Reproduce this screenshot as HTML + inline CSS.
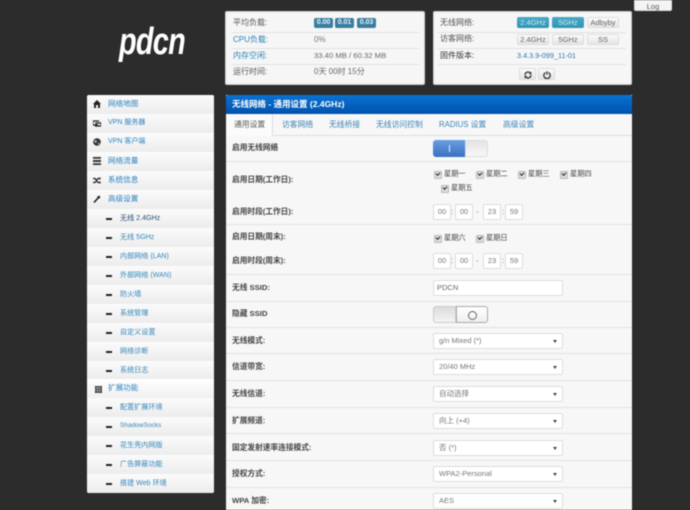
<!DOCTYPE html>
<html lang="zh"><head><meta charset="utf-8"><title>无线网络</title>
<style>
html,body{margin:0;padding:0;width:690px;height:510px;overflow:hidden;background:#2c2c2c}
#w{position:absolute;left:0;top:0;width:690px;height:510px;overflow:hidden;filter:blur(.55px);font-family:"Liberation Sans","Noto Sans CJK SC",sans-serif;font-size:8px;color:#555;background:#2c2c2c}
#w div,#w span.a,#w svg{position:absolute}
.t{white-space:nowrap;line-height:12px;height:12px}
.p{background:#f6f6f6;border-radius:2px;border:1px solid #ccc;box-sizing:border-box}
.l{height:1px;background:#e2e2e2}
.lk{color:#2d82b5}
.b{border-radius:2px;text-align:center;line-height:11px;height:11px;width:32px;box-sizing:border-box;font-size:7.5px}
.on{background:linear-gradient(#49a9c6,#2f95b5);color:#cfeaf3}
.of{background:linear-gradient(#fbfbfb,#e4e4e4);border:1px solid #ddd;color:#666;line-height:9px}
.bd{background:#3a7d9f;color:#e8f4f8;font-weight:bold;font-size:7px;border-radius:2px;height:10px;line-height:10px;text-align:center;top:18px}
.r{left:87px;width:127px;height:19px;background:linear-gradient(#fbfbfb,#ececec)}
.r .t{top:3px}
.m1 .t{left:21px;color:#2d82c0;font-size:7.6px}
.m2 .t{left:33px;color:#3388bb;font-size:7.1px}
.m2 i{position:absolute;left:19px;top:9px;width:6px;height:2px;background:#222}
.lb{left:232px;color:#444;font-weight:bold;font-size:7.7px}
.i{background:#fff;border:1px solid #ddd;box-sizing:border-box;border-radius:2px;color:#777}
.tm{width:18px;height:16px;text-align:center;line-height:14px;font-size:7.5px}
.sl{left:433px;width:130px;height:16px;line-height:14px;padding-left:5px;font-size:7.5px}
.ar:after{content:"";position:absolute;right:5px;top:6px;border:2.5px solid transparent;border-top:3px solid #444}
.c{width:6px;height:6px;background:#ddd;border:1px solid #bbb;border-radius:1px;box-sizing:content-box}
.c:after{content:"";position:absolute;left:1px;top:0;width:3px;height:2px;border-left:1.5px solid #222;border-bottom:1.5px solid #222;transform:rotate(-45deg)}
.ck{color:#444;font-size:7.2px}
.tb{top:119px;color:#3a85b5;font-size:7.8px}
.s{color:#888}
</style></head><body><div id="w">

<div class="t" style="left:119px;top:17px;height:50px;line-height:50px;font-size:38px;font-weight:bold;font-style:italic;color:#fff;letter-spacing:-1px;transform:scaleX(.76);transform-origin:left">pdcn</div>

<div class="b of" style="left:634px;top:-2px;width:38px;height:13px;line-height:15px;background:#f4f4f4;color:#555">Log</div>

<div class="p" style="left:225px;top:11px;width:200px;height:74px"></div>
<div class="l" style="left:231px;top:32px;width:188px"></div>
<div class="l" style="left:231px;top:48px;width:188px"></div>
<div class="l" style="left:231px;top:64px;width:188px"></div>
<div class="t" style="left:233px;top:17px">平均负载:</div>
<div class="bd" style="left:314px;width:19px">0.00</div>
<div class="bd" style="left:335px;width:19px">0.01</div>
<div class="bd" style="left:357px;width:19px">0.03</div>
<div class="t lk" style="left:233px;top:34px">CPU负载:</div><div class="t" style="left:314px;top:34px;color:#777">0%</div>
<div class="t lk" style="left:233px;top:50px">内存空闲:</div><div class="t" style="left:314px;top:50px;color:#666;font-size:7.7px">33.40 MB / 60.32 MB</div>
<div class="t" style="left:233px;top:66px">运行时间:</div><div class="t" style="left:314px;top:66px;color:#666">0天 00时 15分</div>

<div class="p" style="left:433px;top:11px;width:199px;height:74px"></div>
<div class="l" style="left:438px;top:32px;width:188px"></div>
<div class="l" style="left:438px;top:48px;width:188px"></div>
<div class="l" style="left:438px;top:64px;width:188px"></div>
<div class="t" style="left:440px;top:17px">无线网络:</div>
<div class="b on" style="left:517px;top:17px">2.4GHz</div>
<div class="b on" style="left:552px;top:17px">5GHz</div>
<div class="b of" style="left:587px;top:17px">Adbyby</div>
<div class="t" style="left:440px;top:33px">访客网络:</div>
<div class="b of" style="left:517px;top:34px">2.4GHz</div>
<div class="b of" style="left:552px;top:34px">5GHz</div>
<div class="b of" style="left:587px;top:34px">SS</div>
<div class="t" style="left:440px;top:50px;color:#333">固件版本:</div>
<div class="t lk" style="left:517px;top:50px;color:#2a78b0;font-size:7.3px">3.4.3.9-099_11-01</div>
<div class="b of" style="left:519px;top:68px;width:17px;height:12px"><svg style="left:3.5px;top:1.5px" width="8" height="8" viewBox="0 0 8 8"><path d="M1 4A3 3 0 0 1 6.5 2.4M7 4A3 3 0 0 1 1.5 5.6" fill="none" stroke="#333" stroke-width="1.3"/><path d="M7.5 .5V3.3H4.8ZM.5 7.5V4.7H3.2Z" fill="#333"/></svg></div>
<div class="b of" style="left:538px;top:68px;width:17px;height:12px"><svg style="left:3.5px;top:1.5px" width="8" height="8" viewBox="0 0 8 8"><path d="M2.4 1.6A3.2 3.2 0 1 0 5.6 1.6M4 .3V3.6" fill="none" stroke="#333" stroke-width="1.3"/></svg></div>

<div class="p" style="left:87px;top:95px;width:127px;height:398px;border:0;background:#eee"></div>
<div class="r m1" style="top:95px;border-radius:2px 2px 0 0"><svg style="left:6px;top:5px" width="8" height="8" viewBox="0 0 8 8"><path d="M4 0L8 4H7V8H5V5H3V8H1V4H0Z" fill="#222"/></svg><span class="t a">网络地图</span></div>
<div class="r m1" style="top:114px"><svg style="left:6px;top:6px" width="8" height="7" viewBox="0 0 8 7"><path d="M0 1H6M8 2V6H2M0 1V5H5M3 6V3H8" fill="none" stroke="#222" stroke-width="1.2"/></svg><span class="t a" style="font-size:7px">VPN 服务器</span></div>
<div class="r m1" style="top:133px"><svg style="left:6px;top:5px" width="8" height="8" viewBox="0 0 8 8"><circle cx="4" cy="4" r="3.8" fill="#333"/><path d="M2 2L4 3 3 5 1.5 4ZM5 5L7 5 5.5 7Z" fill="#ccc"/></svg><span class="t a" style="font-size:7px">VPN 客户端</span></div>
<div class="r m1" style="top:152px"><svg style="left:6px;top:5px" width="8" height="8" viewBox="0 0 8 8"><path d="M0 0H8V1.7H0ZM0 3H8V5H0ZM0 6.3H8V8H0Z" fill="#333"/></svg><span class="t a">网络流量</span></div>
<div class="r m1" style="top:171px"><svg style="left:6px;top:6px" width="8" height="7" viewBox="0 0 8 7"><path d="M0 1.5H2L5 5.5H7M0 5.5H2L5 1.5H7" fill="none" stroke="#222" stroke-width="1.3"/><path d="M6.5 0L8 1.5 6.5 3ZM6.5 4L8 5.5 6.5 7Z" fill="#222"/></svg><span class="t a">系统信息</span></div>
<div class="r m1" style="top:190px"><svg style="left:6px;top:5px" width="8" height="8" viewBox="0 0 8 8"><path d="M1 7.5L5 3" stroke="#222" stroke-width="1.6"/><path d="M4 2L6 0.5 7.5 2 6 4Z" fill="#222"/></svg><span class="t a">高级设置</span></div>
<div class="r m2" style="top:209px"><i></i><span class="t a" style="color:#274a78">无线 2.4GHz</span></div>
<div class="r m2" style="top:228px"><i></i><span class="t a">无线 5GHz</span></div>
<div class="r m2" style="top:247px"><i></i><span class="t a">内部网络 (LAN)</span></div>
<div class="r m2" style="top:266px"><i></i><span class="t a">外部网络 (WAN)</span></div>
<div class="r m2" style="top:285px"><i></i><span class="t a">防火墙</span></div>
<div class="r m2" style="top:304px"><i></i><span class="t a">系统管理</span></div>
<div class="r m2" style="top:323px"><i></i><span class="t a">自定义设置</span></div>
<div class="r m2" style="top:342px"><i></i><span class="t a">网络诊断</span></div>
<div class="r m2" style="top:361px"><i></i><span class="t a">系统日志</span></div>
<div class="r m1" style="top:379px;height:20px;background:linear-gradient(#fff,#f0f0f0)"><svg style="left:8px;top:7px" width="7" height="7" viewBox="0 0 7 7"><path d="M0 0H7V7H0Z" fill="#333"/><path d="M0 2.2H7M0 4.6H7M2.3 0V7M4.6 0V7" stroke="#ddd" stroke-width=".5"/></svg><span class="t a">扩展功能</span></div>
<div class="r m2" style="top:398px"><i></i><span class="t a">配置扩展环境</span></div>
<div class="r m2" style="top:417px"><i></i><span class="t a" style="font-size:6.5px">ShadowSocks</span></div>
<div class="r m2" style="top:436px"><i></i><span class="t a">花生壳内网版</span></div>
<div class="r m2" style="top:455px"><i></i><span class="t a">广告屏蔽功能</span></div>
<div class="r m2" style="top:474px;border-radius:0 0 2px 2px"><i></i><span class="t a">搭建 Web 环境</span></div>

<div style="left:226px;top:95px;width:406px;height:415px;background:#f7f7f7"></div>
<div style="left:226px;top:95px;width:406px;height:19px;background:linear-gradient(#0a72d2,#0052ae);border-radius:2px 2px 0 0"></div>
<div class="t" style="left:232px;top:98px;color:#fff;font-weight:bold;font-size:8.5px">无线网络 - 通用设置 (2.4GHz)</div>
<div style="left:226px;top:135px;width:406px;height:1px;background:#ddd"></div>
<div style="left:226px;top:114px;width:46px;height:22px;background:#fbfbfb;border-right:1px solid #ddd"></div>
<div class="t tb" style="left:234px;color:#555">通用设置</div>
<div class="t tb" style="left:282px">访客网络</div>
<div class="t tb" style="left:329px">无线桥接</div>
<div class="t tb" style="left:376px">无线访问控制</div>
<div class="t tb" style="left:439px">RADIUS 设置</div>
<div class="t tb" style="left:503px">高级设置</div>

<div class="l" style="left:226px;top:161px;width:406px"></div>
<div class="l" style="left:226px;top:224px;width:406px"></div>
<div class="l" style="left:226px;top:274px;width:406px"></div>
<div class="l" style="left:226px;top:301px;width:406px"></div>
<div class="l" style="left:226px;top:327px;width:406px"></div>
<div class="l" style="left:226px;top:353px;width:406px"></div>
<div class="l" style="left:226px;top:380px;width:406px"></div>
<div class="l" style="left:226px;top:407px;width:406px"></div>
<div class="l" style="left:226px;top:433px;width:406px"></div>
<div class="l" style="left:226px;top:460px;width:406px"></div>
<div class="l" style="left:226px;top:487px;width:406px"></div>

<div class="t lb" style="top:142px">启用无线网络</div>
<div style="left:433px;top:140px;width:33px;height:17px;background:linear-gradient(#6a9ee0,#3a70c0);border-radius:3px 0 0 3px"></div>
<div style="left:449px;top:145px;width:1px;height:7px;background:#e8f0ff"></div>
<div style="left:465px;top:140px;width:23px;height:17px;background:linear-gradient(#e4e4e4,#f8f8f8);border-radius:0 3px 3px 0;box-sizing:border-box;border:1px solid #ddd"></div>

<div class="t lb" style="top:174px">启用日期(工作日):</div>
<div class="c" style="left:434px;top:171px"></div><div class="t ck" style="left:444px;top:168px">星期一</div>
<div class="c" style="left:476px;top:171px"></div><div class="t ck" style="left:486px;top:168px">星期二</div>
<div class="c" style="left:518px;top:171px"></div><div class="t ck" style="left:528px;top:168px">星期三</div>
<div class="c" style="left:560px;top:171px"></div><div class="t ck" style="left:570px;top:168px">星期四</div>
<div class="c" style="left:441px;top:185px"></div><div class="t ck" style="left:451px;top:182px">星期五</div>

<div class="t lb" style="top:206px">启用时段(工作日):</div>
<div class="i tm" style="left:433px;top:204px">00</div><div class="t s" style="left:451px;top:206px">:</div>
<div class="i tm" style="left:455px;top:204px">00</div><div class="t s" style="left:476px;top:206px">-</div>
<div class="i tm" style="left:483px;top:204px">23</div><div class="t s" style="left:502px;top:206px">:</div>
<div class="i tm" style="left:505px;top:204px">59</div>

<div class="t lb" style="top:231px">启用日期(周末):</div>
<div class="c" style="left:434px;top:235px"></div><div class="t ck" style="left:444px;top:232px">星期六</div>
<div class="c" style="left:476px;top:235px"></div><div class="t ck" style="left:486px;top:232px">星期日</div>

<div class="t lb" style="top:255px">启用时段(周末):</div>
<div class="i tm" style="left:433px;top:253px">00</div><div class="t s" style="left:451px;top:255px">:</div>
<div class="i tm" style="left:455px;top:253px">00</div><div class="t s" style="left:476px;top:255px">-</div>
<div class="i tm" style="left:483px;top:253px">23</div><div class="t s" style="left:502px;top:255px">:</div>
<div class="i tm" style="left:505px;top:253px">59</div>

<div class="t lb" style="top:282px">无线 SSID:</div>
<div class="i sl" style="top:280px;padding-left:3px;color:#666">PDCN</div>

<div class="t lb" style="top:308px">隐藏 SSID</div>
<div style="left:433px;top:306px;width:23px;height:17px;background:linear-gradient(#dcdcdc,#f4f4f4);border-radius:3px 0 0 3px;box-sizing:border-box;border:1px solid #ccc"></div>
<div style="left:456px;top:306px;width:32px;height:17px;background:linear-gradient(#fff,#eee);border-radius:0 3px 3px 0;box-sizing:border-box;border:1px solid #aaa"></div>
<div style="left:468px;top:311px;width:7px;height:7px;border:1px solid #666;border-radius:50%"></div>

<div class="t lb" style="top:335px">无线模式:</div><div class="i sl ar" style="top:333px">g/n Mixed (*)</div>
<div class="t lb" style="top:361px">信道带宽:</div><div class="i sl ar" style="top:359px">20/40 MHz</div>
<div class="t lb" style="top:388px">无线信道:</div><div class="i sl ar" style="top:386px">自动选择</div>
<div class="t lb" style="top:415px">扩展频道:</div><div class="i sl ar" style="top:413px">向上 (+4)</div>
<div class="t lb" style="top:442px">固定发射速率连接模式:</div><div class="i sl ar" style="top:440px">否 (*)</div>
<div class="t lb" style="top:468px">授权方式:</div><div class="i sl ar" style="top:466px">WPA2-Personal</div>
<div class="t lb" style="top:495px">WPA 加密:</div><div class="i sl ar" style="top:493px">AES</div>

</div></body></html>
